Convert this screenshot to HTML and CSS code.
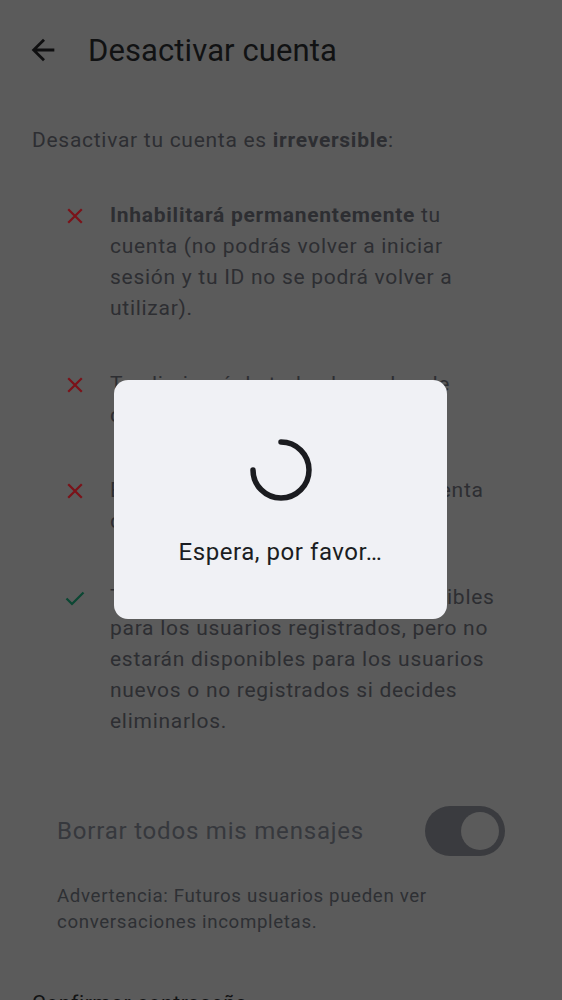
FILE: index.html
```html
<!DOCTYPE html>
<html lang="es">
<head>
<meta charset="utf-8">
<title>Desactivar cuenta</title>
<link rel="stylesheet" href="styles.css">
</head>
<body>
<div class="page">
  <header class="topbar">
    <svg class="back" viewBox="0 0 24 24"><path d="M20 11H7.83l5.59-5.59L12 4l-8 8 8 8 1.41-1.41L7.83 13H20v-2z"/></svg>
    <h1 class="title">Desactivar cuenta</h1>
  </header>
  <main class="content">
    <p class="intro">Desactivar tu cuenta es <b>irreversible</b>:</p>
    <ul class="effects">
      <li class="effect">
        <svg class="ico ico-x" viewBox="0 0 16 16"><path d="M2 2L14 14M14 2L2 14"/></svg>
        <span><b>Inhabilitará permanentemente</b> tu cuenta (no podrás volver a iniciar sesión y tu ID no se podrá volver a utilizar).</span>
      </li>
      <li class="effect">
        <svg class="ico ico-x" viewBox="0 0 16 16"><path d="M2 2L14 14M14 2L2 14"/></svg>
        <span>Te eliminará de todas las salas de conversación.</span>
      </li>
      <li class="effect">
        <svg class="ico ico-x" viewBox="0 0 16 16"><path d="M2 2L14 14M14 2L2 14"/></svg>
        <span>Eliminará la información de tu cuenta de tu servidor de identidad.</span>
      </li>
      <li class="effect">
        <svg class="ico ico-check" viewBox="0 0 20 16"><path d="M1.5 8.5L7 14L18.5 2.5"/></svg>
        <span>Tus mensajes seguirán siendo visibles para los usuarios registrados, pero no estarán disponibles para los usuarios nuevos o no registrados si decides eliminarlos.</span>
      </li>
    </ul>
    <div class="option">
      <span class="option-label">Borrar todos mis mensajes</span>
      <span class="switch"><span class="knob"></span></span>
    </div>
    <p class="warning">Advertencia: Futuros usuarios pueden ver conversaciones incompletas.</p>
    <p class="confirm">Confirmar contraseña</p>
  </main>
</div>
<div class="scrim">
  <div class="dialog">
    <svg class="spinner" viewBox="0 0 64 64" width="64" height="64"><path d="M32 4 A28 28 0 1 1 4 32"/></svg>
    <p class="dialog-text">Espera, por favor…</p>
  </div>
</div>
</body>
</html>
```
FILE: styles.css
```css
html, body {
  margin: 0;
  padding: 0;
}
body {
  background: #5b5b5b;
  font-family: Roboto, "Noto Sans", "Liberation Sans", sans-serif;
  height: 1000px;
  overflow: hidden;
}
.page {
  width: 562px;
}
.topbar {
  height: 100px;
  display: flex;
  align-items: center;
  padding-left: 26px;
  box-sizing: border-box;
}
.back {
  fill: #0f0f10;
  width: 34px;
  height: 34px;
  flex: none;
}
.title {
  margin: 0 0 0 28px;
  font-size: 31px;
  font-weight: 400;
  color: #111213;
  letter-spacing: 0.1px;
}
.content {
  padding: 25px 32px 0 32px;
}
.intro {
  margin: 0;
  font-size: 21px;
  line-height: 31px;
  letter-spacing: 0.72px;
  color: #2d2e32;
}
.intro b {
  font-weight: 700;
}
.effects {
  list-style: none;
  margin: 44px 0 0 0;
  padding: 0 0 0 34px;
  display: flex;
  flex-direction: column;
  gap: 44.7px;
}
.effect {
  display: flex;
  align-items: flex-start;
  font-size: 21px;
  line-height: 31px;
  letter-spacing: 0.72px;
  color: #2d2e32;
  padding-right: 30px;
}
.effect b {
  font-weight: 700;
}
.ico {
  flex: none;
  fill: none;
  stroke-width: 2.2;
  stroke-linecap: square;
}
.ico-x {
  width: 16px;
  height: 16px;
  margin-top: 8px;
  margin-left: 1px;
  margin-right: 27px;
  stroke: #7c1219;
}
.ico-check {
  width: 20px;
  height: 16px;
  margin-top: 8px;
  margin-left: -1px;
  margin-right: 25px;
  stroke: #0b4733;
  stroke-linecap: butt;
}
.option {
  margin: 69px 25px 0 25px;
  display: flex;
  align-items: center;
  justify-content: space-between;
}
.option-label {
  font-size: 24px;
  letter-spacing: 0.8px;
  color: #36383d;
}
.switch {
  width: 80px;
  height: 50px;
  border-radius: 25px;
  background: #3a3b3f;
  display: flex;
  align-items: center;
  justify-content: flex-end;
  padding-right: 6px;
  box-sizing: border-box;
}
.knob {
  width: 38px;
  height: 38px;
  border-radius: 50%;
  background: #5b5b5b;
}
.warning {
  margin: 27px 25px 0 25px;
  font-size: 18.7px;
  line-height: 26px;
  letter-spacing: 0.65px;
  color: #2e3034;
  padding-right: 60px;
}
.confirm {
  margin: 53px 0 0 0;
  font-size: 21px;
  line-height: 31px;
  letter-spacing: 0.6px;
  color: #121314;
}
.scrim {
  position: fixed;
  inset: 0;
  display: flex;
  align-items: flex-start;
  justify-content: flex-start;
}
.dialog {
  margin: 380px 0 0 114px;
  width: 333px;
  height: 239px;
  box-sizing: border-box;
  background: #f0f1f5;
  border-radius: 14px;
  display: flex;
  flex-direction: column;
  align-items: center;
  padding-top: 58px;
}
.spinner {
  fill: none;
  stroke: #1b1c20;
  stroke-width: 5.5;
  stroke-linecap: round;
}
.dialog-text {
  margin: 36px 0 0 0;
  font-size: 24px;
  color: #1b1d22;
  letter-spacing: 0.55px;
}
```
